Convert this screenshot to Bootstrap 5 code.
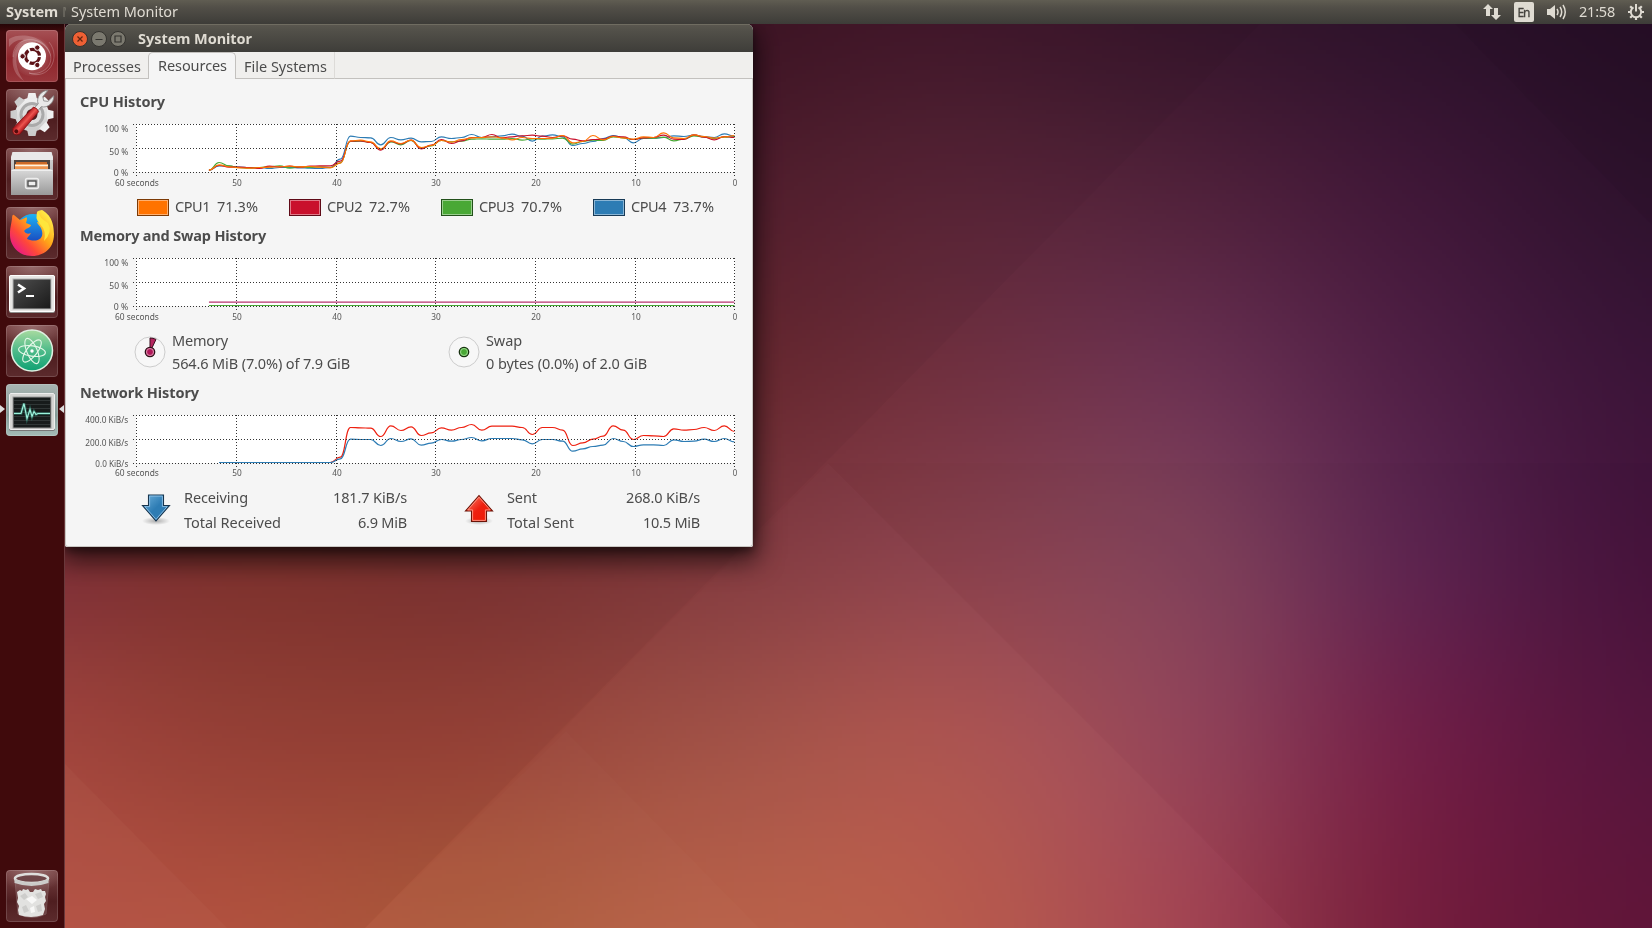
<!DOCTYPE html>
<html lang="en">
<head>
<meta charset="utf-8">
<title>System Monitor</title>
<link href="https://cdn.jsdelivr.net/npm/bootstrap@5.3.0/dist/css/bootstrap.min.css" rel="stylesheet">
<style>
body{width:1652px;height:928px;overflow:hidden;background:#7a2f3c;font-family:"Noto Sans","Open Sans",sans-serif;font-size:14.5px;color:#4c4c4c}
.wall{position:absolute;inset:0;width:1652px;height:928px;z-index:-1}
.topbar{height:24px;background:linear-gradient(#605d52,#524f48 30%,#3d3c38);color:#dfdbd2;position:relative;z-index:3}
.topbar .bold-app{width:66px;padding-left:6px;overflow:hidden}
.faded{color:#77746a;width:6px;overflow:hidden;margin-left:4px}
.launcher{width:65px;height:904px;background:linear-gradient(#250507,#400a0c 8px);border-right:1px solid #69383b;padding:6px 0 6px 6px;gap:7px;position:relative}
.tile{width:52px;height:52px;border-radius:4px;background:radial-gradient(ellipse 34px 22px at 50% 0,#a58080aa,transparent),linear-gradient(#7a4445,#4f1e20 60%,#5c2b2d);box-shadow:inset 0 0 0 1px #ffffff26;flex:none}
.tile svg{display:block}
.tile.dash{background:linear-gradient(#a65155,#8e252b 55%,#98373c)}
.tile.running{background:linear-gradient(#a9b5b2,#849a97 60%,#a5bcb7);position:relative}
.pip{position:absolute;top:20px}
.win{width:688px;height:523px;background:#f5f5f5;border-radius:6px 6px 2px 2px;box-shadow:0 10px 26px 4px #000000a0,0 4px 9px #0006;overflow:hidden}
.titlebar{height:28px;background:linear-gradient(#5b5850,#53514a 20%,#3e3d39);box-shadow:inset 0 1px #6f6c61;color:#dfdbd2;padding:1px 0 0 7px}
.titlebar svg{margin-right:3px}
.tabs{height:27px;background:#f0efed;line-height:28px}
.tab-off{border-bottom:1px solid #c3c1be}
.tab-on{width:88px;background:#f5f5f5;border:1px solid #c3c1be;border-bottom:0;border-radius:5px 5px 0 0;line-height:25px;padding-left:9px;height:27px}
.pane{height:468px;border:solid #c9c7c3;border-width:0 1px 1px;border-radius:0 0 3px 3px}
.sect{font-size:14.5px;font-weight:700;margin:0;padding-left:14px}
.plot{display:block;margin-left:-1px;font-size:8.7px;fill:#555}
.swatch{width:32px;height:17px;border:1px solid;box-shadow:inset 0 0 0 1px #ffffff70}
.usage{line-height:23px}
.net{line-height:25px}
span[data-w]{white-space:pre;display:inline-block}
</style>
</head>
<body>
<canvas class="wall" id="wall" width="413" height="232"></canvas>
<svg class="wall" viewBox="0 0 1652 928">
  <polygon points="1260,24 828,460 365,928 0,928 0,24" fill="#000" opacity=".03"/>
  <polygon points="828,463 1292,928 365,928" fill="#fff" opacity=".012"/>
  <polygon points="566,731 759,928 365,928" fill="#fff" opacity=".015"/>
  <polygon points="65,764 227,928 65,928" fill="#fff" opacity=".025"/>
  <polygon points="1455,24 1652,225 1652,24" fill="#000" opacity=".03"/>
  <polygon points="828,463 1652,463 1652,928 1292,928" fill="#000" opacity=".015"/>
</svg>

<nav class="topbar d-flex align-items-center">
  <div class="bold-app d-flex fw-bold"><span data-w="52">System</span><span class="faded fw-normal">M</span></div>
  <span data-w="107" style="margin-left:5px">System Monitor</span>
  <div class="ms-auto d-flex align-items-center">
    <svg width="18" height="18" viewBox="0 0 18 18" fill="#dfdbd2"><path d="M5 1l5 5H7v7H3V6H0zM13 17l-5-5h3V5h4v7h3z"/></svg>
    <svg width="20" height="20" viewBox="0 0 20 20" style="margin-left:13px"><rect width="20" height="20" rx="2" fill="#dfdbd2"/><text x="3.500" y="15" font-size="12" stroke="#45433e" stroke-width=".3" textLength="13" fill="#45433e">En</text></svg>
    <svg width="22" height="18" viewBox="0 0 22 18" style="margin-left:12px" fill="none" stroke="#dfdbd2" stroke-width="1.500"><path d="M1 6h3l5-4v14l-5-4H1z" fill="#dfdbd2" stroke="none"/><path d="M11 6q2 3 0 6M14 4q3.400 5 0 10M17 2q4.500 7 0 14"/></svg>
    <span data-w="36" style="margin-left:11px">21:58</span>
    <svg width="18" height="18" viewBox="-9 -9 18 18" style="margin-left:12px;margin-right:7px" fill="none" stroke="#dfdbd2"><path d="M-2.500-4.600A5.200 5.200 0 1 0 2.500-4.600" stroke-width="2"/><path d="M0-8v7.500" stroke-width="2"/><path d="M5.500 0h2.500M-5.500 0h-2.500M0 5.500v2.500M4 4l1.800 1.800M-4 4l-1.800 1.800M4-4l1.800-1.800M-4-4l-1.800-1.800" stroke-width="2.200"/></svg>
  </div>
</nav>

<main class="d-flex">
<aside class="launcher d-flex flex-column">
  <div class="tile dash"><svg width="52" height="52" viewBox="0 0 52 52">
    <defs><radialGradient id="sw"><stop offset=".5" stop-color="#fff" stop-opacity=".55"/><stop offset="1" stop-color="#fff" stop-opacity=".05"/></radialGradient></defs>
    <path d="M3 9C16 1 43 7 45 27C40 12 27 8 17 15C9 22 7 36 18 51C0 40 6 16 18 10C12 9 7 12 3 17z" fill="#fff" opacity=".2"/>
    <path d="M7 27C7 6 34 4 43 21C50 35 36 46 23 43C42 51 56 28 43 12" fill="none" stroke="#fff" stroke-width="1" opacity=".22"/>
    <circle cx="26" cy="26.300" r="20" fill="url(#sw)" opacity=".4"/>
    <circle cx="26" cy="26.300" r="14" fill="#fff"/>
    <circle cx="26.500" cy="26.300" r="7" fill="none" stroke="#5d1217" stroke-width="3.200" stroke-dasharray="12.900 1.760" stroke-dashoffset="-.9"/>
    <g fill="#5d1217" stroke="#fff"><circle cx="16.600" cy="26.300" r="2.700"/><circle cx="31.300" cy="17.600" r="2.700"/><circle cx="31.300" cy="35" r="2.700"/></g></svg></div>
  <div class="tile"><svg width="52" height="52" viewBox="0 0 52 52">
    <defs><linearGradient id="gr" x2="0" y2="1"><stop stop-color="#f2f2f2"/><stop offset="1" stop-color="#c9c9c9"/></linearGradient><linearGradient id="rd"><stop stop-color="#a81218"/><stop offset=".5" stop-color="#ee5550"/><stop offset="1" stop-color="#a81218"/></linearGradient></defs>
    <g fill="url(#gr)" transform="translate(26 25.500)"><circle r="17"/><path id="t" d="M-5-15l1.500-6.500h7l1.500 6.500zM-5 15l1.500 6.500h7l1.500-6.500z"/><use href="#t" transform="rotate(45)"/><use href="#t" transform="rotate(90)"/><use href="#t" transform="rotate(135)"/><circle r="12.500" fill="#aaa"/><circle r="9.500" fill="#ddd"/><circle r="5.500" fill="#4e2022"/></g>
    <g transform="translate(25 26) rotate(42)"><path d="M-2.500-4l.5-9C-8-16-9-25-4-29.500l.5 8 3.500 2.500 3.500-2.500 .5-8C9-25 8-16 2-13l.5 9z" fill="#e9e9e9" stroke="#888" stroke-width=".8"/><path d="M-3.500-7.500q3.500-2 7 0l1 29.500q-4.500 7-9 0z" fill="url(#rd)" stroke="#7e0d10" stroke-width=".7"/><circle cy="22" r="2" fill="#560a0c"/></g></svg></div>
  <div class="tile"><svg width="52" height="52" viewBox="0 0 52 52">
    <defs><linearGradient id="cb" x2="0" y2="1"><stop stop-color="#dadada"/><stop offset="1" stop-color="#999"/></linearGradient></defs>
    <path d="M6 5q0-1 1-1h38q1 0 1 1l1 8v31H5V13z" fill="url(#cb)"/><path d="M5 9l2-5h38l2 5v3H5z" fill="#e9e9e9"/><path d="M8 12h36v11H8z" fill="#50453f"/>
    <path d="M10 14h31v9H10z" fill="#cc6a28"/><path d="M9 16h33v7H9z" fill="#ef9650"/><path d="M9 17.500h33" stroke="#fff3e0" stroke-width="1.500"/><path d="M7 21h38l2 2v24H5V23z" fill="url(#cb)"/><path d="M5.500 22.500h41" stroke="#eee"/><rect x="19.500" y="30.500" width="13" height="10" rx="2" fill="#bbb" stroke="#eee" stroke-width="1.400"/><rect x="22" y="33" width="8" height="5" fill="#eee" stroke="#4a4a4a" stroke-width="1.300"/></svg></div>
  <div class="tile"><svg width="52" height="52" viewBox="0 0 52 52">
    <defs><linearGradient id="ff" x1=".9" y1=".1" x2=".1" y2=".9"><stop stop-color="#fff04a"/><stop offset=".4" stop-color="#ffa418"/><stop offset=".7" stop-color="#ff4938"/><stop offset="1" stop-color="#e6158c"/></linearGradient><linearGradient id="fb" x2="0" y2="1"><stop stop-color="#1cb3f5"/><stop offset="1" stop-color="#1a2bb0"/></linearGradient></defs>
    <circle cx="27" cy="25" r="18" fill="url(#fb)"/>
    <path d="M6 12Q6 7 8 8l6 5 5-2q2-2 2 1l-1 4 5 2q0 2-5 4l-2 2q2 4 7 2c-2 4-7 6-1 7 7 2 14-1 12-9-1-5-5-7-5-9 4 0 6 4 7 5 0-5-5-8-7-11-1-6 2-5 5-6 5 3 12 8 12 24C48 43 36 49 26 49 12 49 4 38 4 28c0-8 1-9 2-16z" fill="url(#ff)"/>
    <path d="M32 4q-4 7 2 13 7 7 4 17 9-9 4-18Q33 11 32 4z" fill="#ffe63c"/></svg></div>
  <div class="tile"><svg width="52" height="52" viewBox="0 0 52 52">
    <defs><linearGradient id="tm" x2="1" y2="1"><stop stop-color="#4e4e4e"/><stop offset="1" stop-color="#191919"/></linearGradient></defs>
    <rect x="3" y="9" width="46" height="38" rx="2" fill="#8e8e8c"/><rect x="3.500" y="9.500" width="45" height="36" rx="1.500" fill="#e7e6e4" stroke="#fff"/><rect x="7" y="13" width="38" height="30" fill="url(#tm)" stroke="#b4b4b4"/><path d="M12 18.500l6 4-6 4" fill="none" stroke="#fff" stroke-width="2.600"/><path d="M20 30h8" stroke="#fff" stroke-width="2"/></svg></div>
  <div class="tile"><svg width="52" height="52" viewBox="0 0 52 52">
    <defs><linearGradient id="at" x2="0" y2="1"><stop stop-color="#a9dba0"/><stop offset=".5" stop-color="#4fbb8a"/><stop offset="1" stop-color="#0fa173"/></linearGradient></defs>
    <circle cx="26" cy="25.500" r="20.500" fill="url(#at)" stroke="#dff0e2" stroke-width="1.500"/><g fill="none" stroke="#e4f7e8" stroke-width="1.100" transform="translate(26 26)"><ellipse rx="13.500" ry="5.200" transform="rotate(8)"/><ellipse rx="13.500" ry="5.200" transform="rotate(67)"/><ellipse rx="13.500" ry="5.200" transform="rotate(128)"/></g><circle cx="26" cy="26" r="1.700" fill="#fff"/></svg></div>
  <div class="tile running">
    <svg class="pip" style="left:-6px" width="5" height="10"><path d="M0 1l5 4-5 4z" fill="#ddd"/></svg>
    <svg class="pip" style="left:53px" width="5" height="10"><path d="M5 1L0 5l5 4z" fill="#ddd"/></svg>
    <svg width="52" height="52" viewBox="0 0 52 52"><rect x="3" y="9" width="46" height="38" rx="2" fill="#777"/><rect x="3.500" y="9.500" width="45" height="36" rx="1.500" fill="#d5d5d3" stroke="#eee"/><rect x="7" y="13" width="38" height="31" fill="#171b1b" stroke="#999"/><path d="M8 16.500h36M8 20.500h36M8 24.500h36M8 28.500h36M8 32.500h36M8 36.500h36M8 40.500h36" stroke="#303636" stroke-width="1"/><path d="M8 29.500h7l3-10 3 15 3-9 2 7 2-5 2 3 2-1h12" fill="none" stroke="#3aa38d" stroke-width="3" opacity=".4"/><path d="M8 29.500h7l3-10 3 15 3-9 2 7 2-5 2 3 2-1h12" fill="none" stroke="#9df2dc" stroke-width="1.200"/></svg></div>
  <div class="tile mt-auto"><svg width="52" height="52" viewBox="0 0 52 52">
    <path d="M9 10l3 34q14 7 28 0l3-34z" fill="#c8b0b0" opacity=".2" stroke="#eee" stroke-width="1"/>
    <path d="M11 22l3-2 2 1 1-2 3 1 2-1 2 3 3 0 2-3 3 1 3-1 1 2 3 0 1 3-1 3 1 4-2 3 1 5-2 6q-12 4-24 0l-1-5 1-4-2-4 1-4z" fill="#e2e2e0"/><path d="M14 26l5-3 3 4-4 3zM29 24l6-2 2 5-5 2zM16 37l4-2 3 6-5 2zM30 36l5-2 1 7-4 1z" fill="#cdcdcb"/><path d="M20 29l6-3 5 4-5 4zM24 38l4-2 1 6-4 1z" fill="#f8f8f7"/>
    <ellipse cx="25.500" cy="8.500" rx="16.500" ry="4.500" fill="#6e4648" stroke="#dededc" stroke-width="2.600"/><path d="M8.500 9v4q17 6 34 0V9q-17 7-34 0z" fill="#cbcbc9"/></svg></div>
</aside>

<section class="win">
  <div class="titlebar d-flex align-items-center fw-bold">
    <svg width="16" height="16" viewBox="0 0 16 16"><circle cx="8" cy="8" r="7.500" fill="#ee6034" stroke="#34332f"/><path d="M5.500 5.500l5 5M10.500 5.500l-5 5" stroke="#612510" stroke-width="1.200"/></svg>
    <svg width="16" height="16" viewBox="0 0 16 16"><circle cx="8" cy="8" r="7.500" fill="#7b796f" stroke="#34332f"/><path d="M4.500 8.500h7" stroke="#34332f" stroke-width="1.200"/></svg>
    <svg width="16" height="16" viewBox="0 0 16 16"><circle cx="8" cy="8" r="7.500" fill="#7b796f" stroke="#34332f"/><path d="M5 5h6v6H5z" fill="none" stroke="#34332f" stroke-width="1.200"/></svg>
    <span data-w="114" style="margin-left:9px">System Monitor</span>
  </div>
  <div class="tabs d-flex">
    <div class="tab-off" style="width:83px;padding-left:8px"><span data-w="68">Processes</span></div>
    <div class="tab-on"><span data-w="69">Resources</span></div>
    <div class="tab-off" style="width:99px;padding-left:8px;border-right:1px solid #dddbd8"><span data-w="83">File Systems</span></div>
    <div class="tab-off flex-fill"></div>
  </div>
  <div class="pane">
    <h2 class="sect" style="height:39px;line-height:45px"><span data-w="85">CPU History</span></h2>
    <svg class="plot" id="cpu" width="687" height="74" viewBox="65 0 687 74"></svg>
    <div class="d-flex align-items-center" id="legend" style="height:30px;padding-left:71px"></div>
    <h2 class="sect" style="height:30px;line-height:26px"><span data-w="186">Memory and Swap History</span></h2>
    <svg class="plot" id="mem" width="687" height="74" viewBox="65 0 687 74"></svg>
    <div class="usage d-flex align-items-center" style="height:54px;padding:0 0 2px 68px">
      <div class="d-flex align-items-center" style="width:314px;gap:6px">
        <svg width="32" height="32" viewBox="-16 -16 32 32"><circle r="15" fill="#f7f7f7" stroke="#ccc"/><path d="M0 0V-14Q3-14 6-12.600z" fill="#b5265f" stroke="#3c1020" stroke-width="1"/><circle r="4.700" fill="#b5265f" stroke="#2c1018" stroke-width="1.300"/><circle r="3.500" fill="#b0185a" stroke="#e0a0b8" stroke-width=".9"/></svg>
        <div><div><span data-w="56">Memory</span></div><div><span data-w="178">564.6 MiB (7.0%) of 7.9 GiB</span></div></div>
      </div>
      <div class="d-flex align-items-center" style="gap:6px">
        <svg width="32" height="32" viewBox="-16 -16 32 32"><circle r="15" fill="#f7f7f7" stroke="#ccc"/><circle r="4.700" fill="#49a835" stroke="#17300f" stroke-width="1.300"/><circle r="3.500" fill="#49a835" stroke="#a5dc98" stroke-width=".9"/></svg>
        <div><div><span data-w="36">Swap</span></div><div><span data-w="161">0 bytes (0.0%) of 2.0 GiB</span></div></div>
      </div>
    </div>
    <h2 class="sect" style="height:29px;line-height:25px"><span data-w="119">Network History</span></h2>
    <svg class="plot" id="net" width="687" height="74" viewBox="65 0 687 74"></svg>
    <div class="net d-flex" style="padding:2px 0 0 75px">
      <svg width="30" height="34" viewBox="0 0 30 34" style="margin-top:8px"><defs><linearGradient id="bl" x2="1" y2="1"><stop stop-color="#6fb1dc"/><stop offset=".5" stop-color="#2d7cb4"/><stop offset="1" stop-color="#2d7cb4"/></linearGradient><radialGradient id="sh"><stop stop-opacity=".3"/><stop offset="1" stop-opacity="0"/></radialGradient></defs><ellipse cx="15" cy="28" rx="14" ry="4" fill="url(#sh)"/><path d="M7.500 2h15v10.500h6L15 28 1.500 12.500h6z" fill="url(#bl)" stroke="#17344d" stroke-width="1.100"/><path d="M8.600 3.100h12.800v10.500h4.800L15 26.300 3.800 13.600h4.800z" fill="none" stroke="#8dc0e4" stroke-width=".9"/></svg>
      <div style="width:130px;margin-left:13px"><div><span data-w="64">Receiving</span></div><div><span data-w="97">Total Received</span></div></div>
      <div class="text-end" style="width:93px"><div><span data-w="74">181.7 KiB/s</span></div><div><span data-w="49">6.9 MiB</span></div></div>
      <svg width="30" height="34" viewBox="0 0 30 34" style="margin:8px 0 0 57px"><defs><linearGradient id="rr" x2="1" y2="1"><stop stop-color="#fa8a74"/><stop offset=".5" stop-color="#ee2010"/><stop offset="1" stop-color="#f01800"/></linearGradient></defs><ellipse cx="15" cy="28" rx="14" ry="4" fill="url(#sh)"/><path d="M7.500 28.500h15V18h6L15 2.500 1.500 18h6z" fill="url(#rr)" stroke="#6b1408" stroke-width="1.100"/><path d="M8.600 27.400h12.800V16.900h4.800L15 4.200 3.800 16.900h4.800z" fill="none" stroke="#ff9a88" stroke-width=".9"/></svg>
      <div style="width:100px;margin-left:13px"><div><span data-w="30">Sent</span></div><div><span data-w="67">Total Sent</span></div></div>
      <div class="text-end" style="width:93px"><div><span data-w="74">268.0 KiB/s</span></div><div><span data-w="57">10.5 MiB</span></div></div>
    </div>
  </div>
</section>
</main>

<script src="https://cdn.jsdelivr.net/npm/bootstrap@5.3.0/dist/js/bootstrap.bundle.min.js"></script>
<script>
// Wallpaper: smooth interpolation over a coarse colour mesh
const mesh=[
 '2c0d18 30101c 34121f 3d1424 42172b 36152b 2c122a 260e26',
 '44141e 4a1822 4e1a26 521d2c 582436 50213a 3f1737 2e122d',
 '5c1e28 642328 662529 69282f 70303f 6b3150 501f45 3b1438',
 '80303a 80322f 7c3232 82393d 8b414c 83425a 5f2550 48143c',
 'a84840 9b4338 994438 a04f44 ab524e 97465a 732149 58163e',
 'b85244 b65440 ae5a3c b75f46 b85a4a a24350 78203f 62163a'
].map(r=>r.split(' ').map(h=>[0,2,4].map(i=>parseInt(h.substr(i,2),16))));
const cr=(a,b,c,d,t)=>b+.5*t*(c-a+t*(2*a-5*b+4*c-d+t*(3*(b-c)+d-a)));
const cl=(v,m)=>Math.max(0,Math.min(m,v));
const cx=document.getElementById('wall').getContext('2d'),im=cx.createImageData(413,232);
for(let y=0;y<232;y++)for(let x=0;x<413;x++){
  const u=x/412*7,v=y/231*5,i=Math.min(6,u|0),j=Math.min(4,v|0);
  for(let k=0;k<3;k++){
    const row=n=>{const r=mesh[cl(n,5)];return cr(r[cl(i-1,7)][k],r[i][k],r[i+1][k],r[cl(i+2,7)][k],u-i)};
    im.data[(y*413+x)*4+k]=cr(row(j-1),row(j),row(j+1),row(j+2),v-j);
  }
  im.data[(y*413+x)*4+3]=255;
}
cx.putImageData(im,0,0);

// CPU legend
[['1','71.3%','#ff7300','#7c3a05'],['2','72.7%','#c9102c','#5f0a17'],['3','70.7%','#49a835','#22501a'],['4','73.7%','#2d7cb4','#173a56']].forEach(c=>
 document.getElementById('legend').insertAdjacentHTML('beforeend',`<div class="d-flex align-items-center" style="width:152px"><div class="swatch" style="background:${c[2]};border-color:${c[3]}"></div><span data-w="35" style="margin-left:6px">CPU${c[0]}</span><span data-w="41" style="margin-left:7px">${c[1]}</span></div>`));

// Charts: one sample a second, newest at the right edge; values are thirds of a pixel below the frame top
function plot(id,labels,lines){
  const X=[136.5,236.5,336.5,435.5,535.5,635.5,734.5];
  let s='<rect x="136" y="6" width="599" height="48" fill="#fff"/>';
  lines.forEach(([col,w,vals])=>{
    const p=vals.map((v,k)=>[734.4-10.105*k,6.5+v/3]);
    let d=`M${p[0]}`;
    for(let k=1;k<p.length;k++){const m=(p[k][0]+p[k-1][0])/2;d+=`C${m},${p[k-1][1]} ${m},${p[k][1]} ${p[k]}`}
    s+=`<path d="${d}" fill="none" stroke="${col}" stroke-width="${w}"/>`;
  });
  s+='<g stroke="#333" stroke-dasharray="1 2" shape-rendering="crispEdges">';
  [6.5,30.5,54.5].forEach(y=>s+=`<path d="M133 ${y}H735"/>`);
  X.forEach(x=>s+=`<path d="M${x} 6V58"/>`);
  s+='</g>';
  labels.forEach(([t,w],i)=>s+=`<text x="${128.3-w}" y="${[14,37,58][i]}" textLength="${w}" lengthAdjust="spacingAndGlyphs">${t}</text>`);
  [['60 seconds',44],['50',9.5],['40',9.5],['30',9.5],['20',9.5],['10',9.5],['0',4.5]].forEach(([t,w],i)=>s+=`<text x="${X[i]+.4-w/2}" y="${id=='net'?67:68}" textLength="${w}" lengthAdjust="spacingAndGlyphs">${t}</text>`);
  document.getElementById(id).innerHTML=s;
}
const rel=(t,o)=>t.split(' ').map(v=>v-o), pct=[['100 %',24],['50 %',19],['0 %',14.5]];
plot('cpu',pct,[
 ['#2d7cb4',1.1,rel('168 161 172 169 165 169 167 172 174 175 188 172 166 175 184 190 196 170 164 168 183 168 162 167 170 172 163 172 175 170 184 185 174 179 172 194 173 172 168 237 262 265 264 263 262 262 265 262 262 261 258 257 270',133)],
 ['#49a835',1.1,rel('170 171 175 171 167 177 182 171 174 174 178 173 170 181 180 184 192 174 176 177 176 180 175 177 177 176 177 183 185 181 197 204 181 194 185 208 187 183 184 248 262 260 262 260 264 257 260 262 264 262 257 247 270',133)],
 ['#c9102c',1.1,rel('172 169 179 171 164 178 177 165 172 173 178 170 168 177 178 182 177 167 172 168 165 167 170 173 163 172 172 182 190 178 195 206 180 191 184 210 187 182 183 243 257 257 258 261 258 260 258 265 262 261 261 256 270',133)],
 ['#ff7300',1.1,rel('166 170 174 169 164 175 173 158 172 170 177 173 169 179 166 184 188 166 174 175 175 172 179 173 170 172 173 178 186 181 196 202 180 190 182 206 185 180 182 249 263 261 259 260 258 260 261 262 264 263 260 254 270',133)]]);
plot('mem',pct,[['#b8336f',1.3,Array(53).fill(131)],['#49a835',1.2,Array(53).fill(141)]]);
plot('net',[['400.0 KiB/s',43],['200.0 KiB/s',43],['0.0 KiB/s',33]],[
 ['#ee2010',1.2,rel('154 137 151 142 148 150 146 169 167 166 178 150 137 168 177 188 196 150 142 142 163 142 138 138 138 150 133 142 150 143 158 166 140 151 137 169 144 143 142 231 247 247 247 247 247 247 247 247 247 247 247 247',106)],
 ['#2d7cb4',1.2,rel('185 175 184 177 183 184 179 196 194 194 199 184 175 195 199 206 213 183 178 178 191 179 175 175 175 182 172 178 183 178 189 195 176 184 175 196 178 178 177 236 247 247 247 247 247 247 247 247 247 247 247 247',106)]]);

// Track each label to its set width
document.querySelectorAll('span[data-w]').forEach(e=>{
  const w=e.getBoundingClientRect().width;
  e.style.letterSpacing=(e.dataset.w-w)/e.textContent.length+'px';
});
</script>
</body>
</html>
